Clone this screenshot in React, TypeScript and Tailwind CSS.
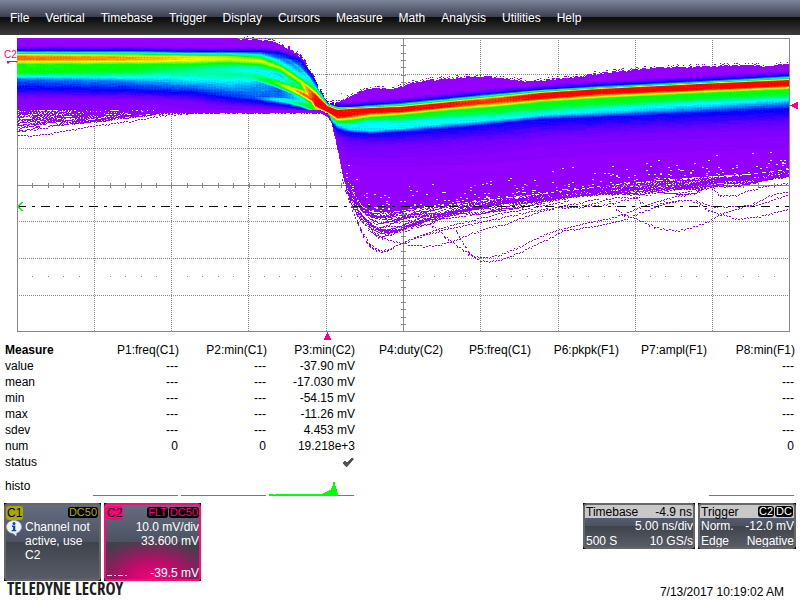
import React, { useMemo } from "react";

type Point = [number, number];

const LEFT = 17;
const RIGHT = 789;
const TOP = 38;
const LEVELS = 50;

const PALETTE: [number, number, number, number][] = [
  [0, 148, 0, 255],
  [0.1, 96, 0, 255],
  [0.2, 0, 0, 255],
  [0.4, 0, 255, 255],
  [0.6, 0, 255, 0],
  [0.8, 255, 255, 0],
  [1, 255, 0, 0],
];

function paletteColor(v: number): string {
  let i = 1;
  while (i < PALETTE.length - 1 && v > PALETTE[i][0]) i++;
  const a = PALETTE[i - 1];
  const b = PALETTE[i];
  const t = Math.min(1, Math.max(0, (v - a[0]) / (b[0] - a[0])));
  const mix = (k: number) => Math.round(a[k] + (b[k] - a[k]) * t);
  return `rgb(${mix(1)},${mix(2)},${mix(3)})`;
}

function at(points: Point[], x: number): number {
  if (x <= points[0][0]) return points[0][1];
  for (let i = 1; i < points.length; i++) {
    if (x <= points[i][0]) {
      const [x0, y0] = points[i - 1];
      const [x1, y1] = points[i];
      return y0 + ((y1 - y0) * (x - x0)) / (x1 - x0);
    }
  }
  return points[points.length - 1][1];
}

function noise(a: number, b: number): number {
  let h = (Math.imul(a + 101, 374761393) + Math.imul(b + 57, 668265263)) | 0;
  h = Math.imul(h ^ (h >>> 13), 1274126177);
  return ((h ^ (h >>> 16)) >>> 0) / 4294967296;
}

// Upper edge of the persistence cloud.
const UPPER: Point[] = [
  [17, 38], [235, 38], [270, 41], [285, 46], [297, 53], [305, 61], [312, 73], [318, 86],
  [325, 98], [330, 103], [340, 101], [350, 96], [360, 91], [370, 88], [390, 89], [400, 87],
  [410, 83], [430, 80], [450, 78], [470, 76], [500, 77], [525, 81], [540, 81], [560, 78],
  [580, 76], [600, 73], [650, 68], [700, 66], [740, 65], [760, 66], [789, 64],
];

// Lower edge of the densely filled part.
const SOLID: Point[] = [
  [17, 110], [200, 110], [320, 110], [327, 113], [330, 118], [335, 135], [340, 158],
  [345, 175], [350, 187], [355, 196], [362, 206], [372, 212], [390, 212], [420, 208],
  [460, 203], [500, 198], [530, 195], [570, 190], [600, 186], [650, 181], [700, 177],
  [750, 174], [789, 169],
];

// Reach of the loose traces below the dense part.
const FRINGE: Point[] = [
  [17, 131], [60, 125], [100, 121], [140, 115], [170, 111], [320, 111], [327, 114],
  [331, 121], [336, 142], [341, 167], [346, 188], [352, 206], [358, 217], [368, 228],
  [378, 236], [395, 234], [410, 228], [430, 222], [460, 215], [500, 209], [530, 204],
  [560, 198], [600, 193], [650, 193], [695, 192], [715, 186], [740, 184], [789, 176],
];

// Colour profile of a column: [x, [y of each stop], [intensity of each stop]].
const PROFILE: [number, number[], number[]][] = [
  [17, [50, 52, 54, 56, 59, 61, 64, 72, 76, 79, 88, 98], [0.2, 0.4, 0.8, 0.91, 0.91, 0.8, 0.61, 0.6, 0.4, 0.27, 0.19, 0.03]],
  [130, [50, 52, 55, 57, 59, 61, 64, 71, 76, 81, 90, 99], [0.2, 0.4, 0.8, 0.88, 0.87, 0.79, 0.6, 0.57, 0.42, 0.3, 0.19, 0.03]],
  [190, [51, 53, 56, 57, 59, 61, 64, 69, 74, 80, 92, 102], [0.2, 0.4, 0.77, 0.81, 0.81, 0.74, 0.59, 0.49, 0.46, 0.38, 0.2, 0.04]],
  [230, [51, 53, 56, 58, 59, 61, 63, 69, 74, 80, 96, 107], [0.2, 0.4, 0.7, 0.77, 0.76, 0.68, 0.56, 0.42, 0.48, 0.4, 0.22, 0.05]],
  [260, [51, 54, 58, 60, 61, 64, 67, 71, 76, 82, 98, 108], [0.2, 0.38, 0.66, 0.78, 0.77, 0.6, 0.46, 0.38, 0.5, 0.34, 0.26, 0.05]],
  [280, [53, 58, 64, 67, 68, 71, 74, 78, 84, 89, 101, 109], [0.2, 0.28, 0.5, 0.76, 0.74, 0.52, 0.36, 0.38, 0.5, 0.26, 0.28, 0.05]],
  [300, [60, 67, 76, 80, 81, 84, 87, 90, 94, 98, 105, 110], [0.2, 0.3, 0.4, 0.76, 0.76, 0.6, 0.5, 0.55, 0.6, 0.4, 0.35, 0.06]],
  [315, [81, 86, 91, 95, 105, 106, 107, 108, 109, 110, 111, 112], [0.2, 0.35, 0.7, 1, 1, 0.9, 0.8, 0.65, 0.5, 0.35, 0.2, 0.08]],
  [327, [102, 104, 105, 106, 111, 112, 113, 114, 115, 116, 117, 119], [0.2, 0.4, 0.8, 1, 1, 0.8, 0.62, 0.5, 0.4, 0.3, 0.2, 0.04]],
  [337, [106, 107, 109, 110, 117, 119, 121, 122, 124, 126, 129, 138], [0.2, 0.4, 0.8, 1, 1, 0.8, 0.6, 0.55, 0.4, 0.35, 0.2, 0.05]],
  [350, [106, 107, 108, 109, 115, 118, 120, 122, 125, 129, 132, 144], [0.2, 0.4, 0.8, 1, 1, 0.8, 0.6, 0.55, 0.4, 0.38, 0.19, 0.06]],
  [370, [104, 106, 107, 108, 112, 115, 117, 119, 122, 130, 134, 147], [0.2, 0.4, 0.8, 1, 1, 0.8, 0.6, 0.53, 0.4, 0.38, 0.18, 0.05]],
  [400, [102, 104, 106, 107, 111, 113, 115, 119, 121, 128, 132, 147], [0.2, 0.4, 0.8, 1, 1, 0.8, 0.6, 0.53, 0.42, 0.38, 0.18, 0.05]],
  [450, [97, 99, 101, 102, 106, 108, 110, 115, 118, 123, 128, 145], [0.2, 0.4, 0.8, 0.99, 0.99, 0.8, 0.6, 0.52, 0.42, 0.38, 0.19, 0.05]],
  [490, [93, 95, 97, 99, 102, 105, 107, 113, 116, 120, 124, 143], [0.2, 0.4, 0.8, 0.95, 0.95, 0.8, 0.6, 0.53, 0.44, 0.38, 0.19, 0.05]],
  [540, [89, 90, 92, 93, 98, 100, 102, 108, 112, 115, 119, 140], [0.2, 0.4, 0.8, 1, 1, 0.8, 0.6, 0.54, 0.44, 0.38, 0.19, 0.04]],
  [600, [85, 87, 88, 89, 93, 96, 98, 104, 108, 112, 117, 136], [0.2, 0.4, 0.8, 1, 1, 0.8, 0.6, 0.55, 0.42, 0.37, 0.19, 0.04]],
  [700, [80, 82, 83, 84, 89, 91, 93, 98, 102, 107, 113, 132], [0.2, 0.4, 0.8, 1, 1, 0.8, 0.6, 0.56, 0.42, 0.34, 0.19, 0.04]],
  [789, [75, 77, 79, 80, 85, 87, 89, 94, 99, 103, 109, 130], [0.2, 0.4, 0.8, 1, 1, 0.8, 0.6, 0.57, 0.4, 0.3, 0.19, 0.04]],
];

// Bright strands that converge on the trigger point.
const RIDGES: { y: Point[]; v: Point[]; w: number }[] = [
  { y: [[250, 76], [275, 82], [285, 86], [300, 92], [312, 99], [320, 105]], v: [[250, 0.45], [265, 0.58], [285, 0.74], [300, 0.9], [320, 1]], w: 4 },
  { y: [[255, 97], [285, 100], [300, 103], [318, 109]], v: [[255, 0.28], [280, 0.42], [300, 0.55], [318, 0.7]], w: 3 },
  { y: [[270, 54], [290, 61], [300, 68], [310, 80], [320, 99]], v: [[270, 0.2], [290, 0.32], [305, 0.4], [320, 0.6]], w: 3 },
  { y: [[250, 68], [275, 75], [290, 82], [305, 92], [318, 103]], v: [[250, 0.4], [275, 0.42], [305, 0.62], [318, 0.9]], w: 2 },
];

// Individual outlier traces.
const OUTLIERS: Point[][] = [
  [[340, 172], [346, 192], [352, 209], [357, 222], [362, 233], [368, 243], [376, 249], [382, 250], [390, 248], [400, 243], [420, 235], [440, 228], [470, 220], [500, 213], [530, 208], [570, 200]],
  [[356, 218], [362, 231], [370, 243], [380, 252], [388, 250], [396, 245], [415, 238], [440, 230], [480, 222], [520, 213], [560, 206], [600, 198]],
  [[372, 232], [380, 236], [390, 240], [403, 243], [425, 246], [440, 244], [455, 240], [470, 233], [490, 227], [510, 222], [530, 214], [560, 206], [600, 205], [640, 196]],
  [[430, 223], [440, 231], [450, 240], [460, 247], [470, 254], [480, 257], [488, 257], [500, 254], [515, 248], [530, 241], [545, 234], [560, 229], [585, 223], [610, 218], [625, 213], [645, 205], [675, 196], [700, 192]],
  [[455, 228], [460, 238], [468, 250], [476, 259], [486, 261], [498, 260], [510, 256], [530, 247], [548, 238], [565, 230], [600, 225], [622, 220], [640, 212], [660, 205], [680, 199]],
  [[606, 198], [612, 203], [620, 212], [630, 216], [645, 222], [660, 228], [678, 230], [690, 227], [700, 224], [712, 219], [722, 213], [740, 208], [755, 202], [770, 195], [789, 190]],
  [[560, 207], [580, 207], [600, 201], [615, 197], [635, 197], [645, 204], [655, 205], [665, 201], [690, 200], [700, 204], [712, 211], [722, 214], [735, 218], [755, 217], [770, 213], [789, 209]],
  [[712, 189], [722, 195], [737, 195], [746, 191], [760, 187], [789, 182]],
  [[695, 200], [712, 206], [735, 206], [760, 204], [775, 198], [789, 194]],
  [[17, 135], [35, 135], [50, 133], [75, 129], [90, 126], [120, 122], [140, 119], [160, 115], [180, 113], [220, 111]],
];

function intensity(x: number, y: number): number {
  let i = 1;
  while (i < PROFILE.length - 1 && x > PROFILE[i][0]) i++;
  const [x0, ys0, vs0] = PROFILE[i - 1];
  const [x1, ys1, vs1] = PROFILE[i];
  const t = (x - x0) / (x1 - x0);
  let v = 0;
  let prevY = 0;
  let prevV = 0;
  for (let k = 0; k < ys0.length; k++) {
    const ky = ys0[k] + (ys1[k] - ys0[k]) * t;
    const kv = vs0[k] + (vs1[k] - vs0[k]) * t;
    if (k === 0) {
      prevY = ky - 5;
      prevV = 0;
    }
    if (y >= prevY && y <= ky) {
      v = prevV + ((kv - prevV) * (y - prevY)) / Math.max(ky - prevY, 0.01);
      break;
    }
    prevY = ky;
    prevV = kv;
  }
  // The blue tail fades slowly into violet.
  if (y > prevY && v === 0) v = Math.max(0, prevV * (1 - (y - prevY) / 25));
  if (x > 248 && x < 321) {
    for (const r of RIDGES) {
      if (x < r.y[0][0]) continue;
      const d = (y - at(r.y, x)) / r.w;
      v = Math.max(v, at(r.v, x) * Math.exp(-d * d * 0.5));
    }
  }
  if (v > 0.04) {
    const streak = noise(Math.floor(x / 9), y) - 0.5;
    v += streak * 0.025 + (x % 3 === 0 ? 0.012 : 0);
  }
  return Math.min(1, Math.max(0, v));
}

function buildHeatmap(): string[] {
  const paths: string[] = Array.from({ length: LEVELS + 1 }, () => "");
  const traces = 26;
  const put = (level: number, x: number, y: number, h: number) => {
    paths[level] += `M${x} ${y}h1v${h}h-1z`;
  };

  for (let x = LEFT; x < RIGHT; x++) {
    const ragged = x > 235 ? (noise(x >> 1, 3) - 0.4) * (x > 280 && x < 335 ? 5 : 2) : 0;
    const top = Math.max(TOP, Math.round(at(UPPER, x) + ragged));
    const solid = Math.round(at(SOLID, x));
    let runStart = top;
    let runLevel = -1;
    for (let y = top; y <= solid; y++) {
      let level = y === solid ? -1 : Math.round(intensity(x, y) * LEVELS);
      const depth = solid - y;
      if (x > 345 && depth < 24 && noise(x >> 1, y) < 0.12 * Math.exp(-depth / 9)) level = -1;
      if (level !== runLevel) {
        if (runLevel >= 0) put(runLevel, x, runStart, y - runStart);
        runStart = y;
        runLevel = level;
      }
    }
    if (x > 235 && noise(x, 9) < 0.3) put(0, x, top - 2, 1);
  }

  // Loose traces are sampled two columns out of three.
  for (let n = 0; n < traces; n++) {
    const share = Math.pow((n + 0.5) / traces, 1.25);
    let last = -1;
    for (let x = LEFT; x < RIGHT; x++) {
      const a = at(SOLID, x);
      const b = at(FRINGE, x);
      const wobble = x < 330 ? 1.5 : Math.min(4, (b - a) * 0.25);
      const jitter = noise(x >> 1, n + 300) < 0.25 ? 1 : 0;
      const y = Math.round(a + (b - a) * share + wobble * Math.sin(x / (13 + (n % 7) * 4) + n * 2.1)) + jitter;
      const lo = last < 0 ? y : Math.min(last, y);
      const hi = last < 0 ? y : Math.max(last, y);
      last = y;
      if (y < a || y > b + 2) continue;
      if (x < 200 && noise(x >> 3, n + 40) < 0.15) continue;
      if ((x + n) % 3 !== 0) put(0, x, y, 1);
      for (let k = lo + 1; k < hi; k++) if (noise(x, k + n) < 0.45) put(0, x, k, 1);
    }
  }

  for (const trace of OUTLIERS) {
    const start = trace[0][0];
    const end = Math.min(RIGHT, trace[trace.length - 1][0]);
    for (let x = start; x < end; x++) {
      const jitter = noise(x >> 1, start) < 0.3 ? 1 : 0;
      const y = Math.round(at(trace, x)) + jitter;
      const rise = Math.abs(y - Math.round(at(trace, x - 1)));
      if (x % 3 !== 2) put(0, x, y, Math.max(1, Math.min(2, rise)));
    }
  }
  return paths;
}

const COLUMNS = [94, 171, 248, 326, 480, 558, 635, 712];
const ROWS = [74, 111, 148, 221, 258, 295];

function Graticule() {
  const ticks: number[] = [];
  for (let i = 1; i < 50; i++) ticks.push(LEFT + Math.round(i * 15.44));
  const sideTicks: number[] = [];
  for (let i = 1; i < 40; i++) sideTicks.push(TOP + Math.round(i * 7.33));
  return (
    <g fill="none" stroke="#888888" strokeWidth="1" shapeRendering="crispEdges">
      <path d={COLUMNS.map((x) => `M${x + 0.5} 40V331`).join("")} strokeDasharray="1 1" />
      <path d={ROWS.map((y) => `M19 ${y + 0.5}H789`).join("")} strokeDasharray="1 1" />
      <path d="M17 185.5H789M403.5 38V331" />
      <path d={ticks.map((x) => `M${x + 0.5} 183V188M${x + 0.5} 276V277M${x + 0.5} 93V94`).join("")} />
      <path d={sideTicks.map((y) => `M401 ${y + 0.5}H406`).join("")} />
      <path d="M17.5 38.5H789.5V331.5H17.5Z" />
    </g>
  );
}

function Waveform() {
  const paths = useMemo(buildHeatmap, []);
  return (
    <svg viewBox="0 35 800 307" className="block w-full" role="img" aria-label="C2 persistence display">
      <Graticule />
      <g shapeRendering="crispEdges">
        {paths.map((d, i) => (d ? <path key={i} d={d} fill={paletteColor(i / LEVELS)} /> : null))}
        <path d="M17 206.5H789" stroke="#000000" strokeDasharray="9 6 3 6" />
        <path d="M22.5 202L18 206.5L22.5 211" stroke="#00ff00" strokeWidth="2" fill="none" />
        <path d="M7 61H17V62H16V61.500H9V63H7Z" fill="#ff0080" stroke="#ff0080" strokeWidth="0.5" />
        <path d="M790 105H792V104H794V103H796V102H798V109H796V108H794V107H792V106H790Z" fill="#ff0080" />
        <path d="M327 332H328V334H329V336H330V338H331V340H324V338H325V336H326V334H327Z" fill="#ff0080" />
      </g>
      <text x="4" y="58" fontSize="10" fill="#ff0080">C2</text>
    </svg>
  );
}

const MENU = ["File", "Vertical", "Timebase", "Trigger", "Display", "Cursors", "Measure", "Math", "Analysis", "Utilities", "Help"];

const HEADERS = ["P1:freq(C1)", "P2:min(C1)", "P3:min(C2)", "P4:duty(C2)", "P5:freq(C1)", "P6:pkpk(F1)", "P7:ampl(F1)", "P8:min(F1)"];

const MEASURES: [string, string[]][] = [
  ["value", ["---", "---", "-37.90 mV", "", "", "", "", "---"]],
  ["mean", ["---", "---", "-17.030 mV", "", "", "", "", "---"]],
  ["min", ["---", "---", "-54.15 mV", "", "", "", "", "---"]],
  ["max", ["---", "---", "-11.26 mV", "", "", "", "", "---"]],
  ["sdev", ["---", "---", "4.453 mV", "", "", "", "", "---"]],
  ["num", ["0", "0", "19.218e+3", "", "", "", "", "0"]],
];

function Histogram({ peak }: { peak: boolean }) {
  return (
    <svg viewBox="0 0 85 16" className="block h-4 w-full" preserveAspectRatio="none" shapeRendering="crispEdges" aria-hidden="true">
      <path d="M0 15.5H85" stroke="#00cc00" />
      {peak && (
        <path
          fill="#00ff00"
          d="M0 14H5V16H0ZM6 14H54V13H56V12H58V11H60V10H62V8H63V6H64V2H66V6H67V9H68V13H69V16H6Z"
        />
      )}
    </svg>
  );
}

function MeasureTable() {
  return (
    <table className="w-full table-fixed border-collapse text-right">
      <thead>
        <tr className="h-4">
          <th scope="col" className="p-0 pl-[5px] text-left font-bold">Measure</th>
          {HEADERS.map((h) => (
            <th key={h} scope="col" className="w-[11%] p-0 pr-[5px] font-normal">{h}</th>
          ))}
        </tr>
      </thead>
      <tbody>
        {MEASURES.map(([name, cells]) => (
          <tr key={name} className="h-4">
            <th scope="row" className="p-0 pl-[5px] text-left font-normal">{name}</th>
            {cells.map((c, i) => (
              <td key={i} className={c.endsWith("mV") || c.includes("e+") ? "p-0 pr-[5px]" : "p-0 pr-[6px]"}>{c}</td>
            ))}
          </tr>
        ))}
        <tr className="h-4">
          <th scope="row" className="p-0 pl-[5px] text-left font-normal">status</th>
          <td /><td />
          <td className="p-0 pr-[6px]">
            <svg viewBox="0 0 12 10" className="ml-auto block w-3" aria-label="OK">
              <path d="M1 6L3 4L5 6L10 1L11.500 2L5 9.500L4 9.500Z" fill="#505050" stroke="#404040" strokeWidth="0.8" />
            </svg>
          </td>
          <td /><td /><td /><td /><td />
        </tr>
        <tr className="h-[26px]">
          <th scope="row" className="p-0 pt-[6px] pl-[5px] text-left font-normal">histo</th>
          {HEADERS.map((h, i) => (
            <td key={h} className="p-0 align-bottom">
              {(i < 3 || i === 7) && (
                <div className="-ml-[3px] pr-[6px]">
                  <Histogram peak={i === 2} />
                </div>
              )}
            </td>
          ))}
        </tr>
      </tbody>
    </table>
  );
}

function Badge({ className, children }: { className: string; children: React.ReactNode }) {
  return <span className={`rounded-[3px] bg-black px-px text-[11px] leading-[11px] ${className}`}>{children}</span>;
}

const PANEL = "bg-[linear-gradient(#646c80,#4b5262_50%,#3f434c_50%,#585c66)]";

function ChannelOne() {
  return (
    <button type="button" className="block h-[78px] w-[97px] bg-black text-left text-white">
      <span className={`flex h-full flex-col rounded-[4px] border-2 border-[#666666] ${PANEL}`}>
        <span className="flex h-[15px] items-center justify-between pr-px">
          <span className="rounded-[3px] bg-[#a8a800] px-px leading-[14px] text-black">C1</span>
          <Badge className="text-[#b0b000]">DC50</Badge>
        </span>
        <span className="flex items-start">
          <svg viewBox="0 0 16 16" className="h-4 w-4 shrink-0" aria-hidden="true">
            <path d="M8 0.500C12 0.500 15.500 3 15.500 6.800C15.500 10 13 12.300 10.500 13L10 16L7 13.300C3.500 13 0.500 10.500 0.500 6.800C0.500 3 4 0.500 8 0.500Z" fill="#eef3ff" stroke="#a9b6d0" strokeWidth="0.7" />
            <circle cx="8" cy="3.500" r="1.500" fill="#1546b8" />
            <path d="M6 5.600H9.300V10H10.300V11.300H5.700V10H7V7H6Z" fill="#1546b8" />
          </svg>
          <span className="pl-[3px] leading-[14px]">Channel not active, use C2</span>
        </span>
      </span>
    </button>
  );
}

function ChannelTwo() {
  return (
    <button type="button" className="block h-[78px] w-[97px] bg-black text-right text-white">
      <span className="flex h-full flex-col overflow-hidden whitespace-nowrap rounded-[4px] border-2 border-[#f0107c] bg-[radial-gradient(ellipse_72%_56%_at_50%_100%,#f4047c,#c00a6a_40%,transparent),linear-gradient(#646c80,#4b5262_50%,#3f434c_50%,#3c3a48)]">
        <span className="flex h-[15px] items-center">
          <span className="mr-auto rounded-[3px] bg-[#ff0080] px-px leading-[14px] text-black">C2</span>
          <Badge className="mr-px text-[#ff0080]">FLT</Badge>
          <Badge className="text-[#ff0080]">DC50</Badge>
        </span>
        <span className="leading-[14px]">10.0 mV/div</span>
        <span className="leading-[14px]">33.600 mV</span>
        <span className="mt-auto flex items-center justify-between leading-3">
          <svg viewBox="0 0 22 3" className="mt-1 w-[22px]" shapeRendering="crispEdges" aria-hidden="true">
            <path d="M1 1.500H22" stroke="#ffffff" strokeDasharray="5 2 2 2" />
          </svg>
          -39.5 mV
        </span>
      </span>
    </button>
  );
}

function InfoPanel({ width, head, rows }: { width: string; head: React.ReactNode; rows: [string, string][] }) {
  return (
    <button type="button" className={`block h-[46px] bg-black text-white ${width}`}>
      <span className={`flex h-full flex-col overflow-hidden whitespace-nowrap rounded-[4px] border-2 border-[#666666] ${PANEL}`}>
        <span className="flex h-[13px] items-center justify-between bg-[#c8c8c8] px-px text-black">{head}</span>
        {rows.map(([a, b]) => (
          <span key={b} className="flex justify-between pt-px leading-[14px]">
            <span className="pl-px">{a}</span>
            <span>{b}</span>
          </span>
        ))}
      </span>
    </button>
  );
}

export default function App() {
  return (
    <div className="w-full bg-white font-['Liberation_Sans',Arial,sans-serif] text-xs leading-4 text-black">
      <nav className="flex h-[35px] items-center gap-4 bg-[linear-gradient(#7c869b,#3b4050_48%,#0c0c0c_49%,#151515_60%,#3c3c3c)] px-[10px] text-white">
        {MENU.map((m) => (
          <button key={m} type="button">{m}</button>
        ))}
      </nav>
      <main>
        <Waveform />
        <MeasureTable />
      </main>
      <footer className="flex items-start justify-between px-1 pt-[7px]">
        <div>
          <div className="flex gap-[3px]">
            <ChannelOne />
            <ChannelTwo />
          </div>
          <p className="pl-[3px] font-['Liberation_Sans_Narrow','Open_Sans_Condensed',Lato,sans-serif] text-[17px] leading-4 text-[#202020]">
            <strong className="font-bold">TELEDYNE</strong> <span className="font-light">LECROY</span>
          </p>
        </div>
        <div>
          <div className="flex gap-[3px]">
            <InfoPanel
              width="w-[112px]"
              head={<><span>Timebase</span><span>-4.9 ns</span></>}
              rows={[["", "5.00 ns/div"], ["500 S", "10 GS/s"]]}
            />
            <InfoPanel
              width="w-[98px]"
              head={
                <>
                  <span>Trigger</span>
                  <span className="flex gap-px">
                    <Badge className="text-white">C2</Badge>
                    <Badge className="text-white">DC</Badge>
                  </span>
                </>
              }
              rows={[["Norm.", "-12.0 mV"], ["Edge", "Negative"]]}
            />
          </div>
          <p className="pt-[35px] pr-3 text-right">7/13/2017 10:19:02 AM</p>
        </div>
      </footer>
    </div>
  );
}
